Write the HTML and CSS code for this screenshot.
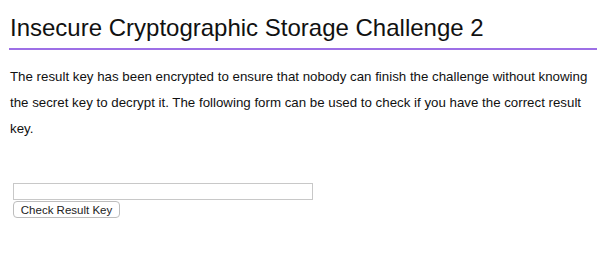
FILE: index.html
```html
<!DOCTYPE html>
<html>
<head>
<meta charset="utf-8">
<link rel="stylesheet" href="styles.css">
</head>
<body>
<h1 class="title">Insecure Cryptographic Storage Challenge 2</h1>
<p class="desc">The result key has been encrypted to ensure that nobody can finish the challenge without knowing the secret key to decrypt it. The following form can be used to check if you have the correct result key.</p>
<form class="form">
<input class="key-input" type="text">
<button class="check-btn" type="button">Check Result Key</button>
</form>
</body>
</html>
```
FILE: styles.css
```css
html, body {
  margin: 0;
  padding: 0;
  background: #fff;
}
body {
  padding: 0 8px 0 9px;
  font-family: "Liberation Sans", Arial, sans-serif;
  color: #000;
}
.title {
  margin: 14px 0 0 0;
  padding: 0 0 6px 1px;
  font-size: 24px;
  font-weight: normal;
  letter-spacing: 0;
  line-height: 28px;
  color: #111;
  border-bottom: 2px solid #9d6fe6;
}
.desc {
  margin: 14px 0 0 1px;
  font-size: 13.3px;
  line-height: 26px;
  color: #111;
}
.form {
  margin-top: 41px;
  padding-left: 4px;
  display: flex;
  flex-direction: column;
  align-items: flex-start;
  gap: 1px;
}
.key-input {
  width: 300px;
  height: 17px;
  box-sizing: border-box;
  border: 1px solid #c8c8c8;
  margin: 0;
  padding: 0 2px;
}
.check-btn {
  height: 17px;
  width: 107px;
  box-sizing: border-box;
  padding: 0 6px;
  margin: 0;
  font-family: "Liberation Sans", Arial, sans-serif;
  font-size: 11.5px;
  color: #222;
  background: #fff;
  border: 1px solid #bdbdbd;
  border-radius: 4px;
}
```
